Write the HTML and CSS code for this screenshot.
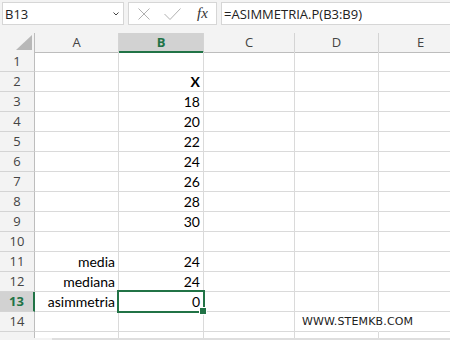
FILE: index.html
```html
<!DOCTYPE html>
<html lang="it">
<head>
    <meta charset="UTF-8">
    <title>asimmetria</title>
    <link rel="stylesheet" href="styles.css">
</head>
<body>
    <div class="toolbar">
        <div class="namebox">
            <span>B13</span>
            <svg class="chev" width="6" height="4" viewBox="0 0 6 4"><path d="M0.5 0.5L3 3L5.5 0.5" stroke="#444" fill="none"/></svg>
        </div>
        <div class="fbtns">
            <svg width="12" height="12" viewBox="0 0 12 12"><path d="M0.5 0.5L11.5 11.5M11.5 0.5L0.5 11.5" stroke="#b0b0b0" fill="none"/></svg>
            <svg class="ok" width="17" height="12" viewBox="0 0 17 12"><path d="M0.5 6L6 11.5L16.5 0.5" stroke="#b0b0b0" fill="none"/></svg>
            <span class="fx">fx</span>
        </div>
        <div class="formula">=ASIMMETRIA.P(B3:B9)</div>
    </div>

    <div class="sheet">
        <div class="row head">
            <div class="corner"><svg width="16" height="15" viewBox="0 0 16 15"><path d="M16 0V15H0Z" fill="#b8b8b8"/></svg></div>
            <div class="ch">A</div><div class="ch sel">B</div><div class="ch">C</div><div class="ch">D</div><div class="ch">E</div>
        </div>
        <div class="row"><div class="rh">1</div><div class="c"></div><div class="c"></div><div class="c"></div><div class="c"></div><div class="c"></div></div>
        <div class="row"><div class="rh">2</div><div class="c"></div><div class="c bold">X</div><div class="c"></div><div class="c"></div><div class="c"></div></div>
        <div class="row"><div class="rh">3</div><div class="c"></div><div class="c">18</div><div class="c"></div><div class="c"></div><div class="c"></div></div>
        <div class="row"><div class="rh">4</div><div class="c"></div><div class="c">20</div><div class="c"></div><div class="c"></div><div class="c"></div></div>
        <div class="row"><div class="rh">5</div><div class="c"></div><div class="c">22</div><div class="c"></div><div class="c"></div><div class="c"></div></div>
        <div class="row"><div class="rh">6</div><div class="c"></div><div class="c">24</div><div class="c"></div><div class="c"></div><div class="c"></div></div>
        <div class="row"><div class="rh">7</div><div class="c"></div><div class="c">26</div><div class="c"></div><div class="c"></div><div class="c"></div></div>
        <div class="row"><div class="rh">8</div><div class="c"></div><div class="c">28</div><div class="c"></div><div class="c"></div><div class="c"></div></div>
        <div class="row"><div class="rh">9</div><div class="c"></div><div class="c">30</div><div class="c"></div><div class="c"></div><div class="c"></div></div>
        <div class="row"><div class="rh">10</div><div class="c"></div><div class="c"></div><div class="c"></div><div class="c"></div><div class="c"></div></div>
        <div class="row"><div class="rh">11</div><div class="c">media</div><div class="c">24</div><div class="c"></div><div class="c"></div><div class="c"></div></div>
        <div class="row"><div class="rh">12</div><div class="c">mediana</div><div class="c">24</div><div class="c"></div><div class="c"></div><div class="c"></div></div>
        <div class="row"><div class="rh sel">13</div><div class="c">asimmetria</div><div class="c active">0</div><div class="c"></div><div class="c"></div><div class="c"></div></div>
        <div class="row"><div class="rh">14</div><div class="c"></div><div class="c"></div><div class="c"></div><div class="c wm">WWW.STEMKB.COM</div><div class="c"></div></div>
        <div class="row"><div class="rh"></div><div class="c"></div><div class="c"></div><div class="c"></div><div class="c"></div><div class="c"></div></div>
    </div>
    <div class="hbar"><div class="hbar-left"></div><div class="hbar-track"></div></div>
</body>
</html>
```

FILE: styles.css
```css
*{
    box-sizing: border-box;
}
body{
    margin: 0;
    width: 450px;
    height: 340px;
    overflow: hidden;
    background-color: #fff;
    font-family: "Open Sans", sans-serif;
    color: #222;
}

/* formula bar */
.toolbar{
    display: flex;
    align-items: flex-start;
    gap: 4px;
    height: 33px;
    padding: 2px 0 0 2px;
    background-color: #f3f3f3;
}
.namebox,
.fbtns,
.formula{
    height: 23px;
    background-color: #fff;
    border: 1px solid #d6d6d6;
    display: flex;
    align-items: center;
    font-size: 13px;
}
.namebox{
    width: 122px;
    justify-content: space-between;
    padding: 0 4px 0 2px;
}
.chev{
    margin-top: 1px;
}
.fbtns{
    width: 89px;
    padding-left: 9px;
}
.ok{
    margin-left: 14px;
}
.fx{
    margin-left: 16px;
    font-family: "Liberation Serif", serif;
    font-style: italic;
    font-size: 15px;
    color: #333;
}
.formula{
    flex: 1;
    padding-left: 2px;
    border-right: none;
}

/* grid */
.sheet{
    height: 305px;
    overflow: hidden;
}
.row{
    display: grid;
    grid-template-columns: 35px 84px 85px 91px 84px 84px;
    height: 20px;
}
.row.head{
    height: 19px;
}
.corner,
.ch{
    background-color: #f3f3f3;
    border-right: 1px solid #d4d4d4;
    border-bottom: 1px solid #bdbdbd;
    font-size: 13px;
    line-height: 18px;
    text-align: center;
    color: #444;
}
.corner{
    display: flex;
    justify-content: flex-end;
    align-items: flex-end;
    padding: 0 2px 2px 0;
    border-right-color: #bdbdbd;
}
.ch.sel{
    background-color: #d2d2d2;
    border-bottom: 2px solid #217346;
    color: #217346;
    font-weight: bold;
}
.rh{
    background-color: #f3f3f3;
    border-right: 1px solid #bdbdbd;
    border-bottom: 1px solid #d4d4d4;
    font-size: 13px;
    line-height: 19px;
    text-align: center;
    color: #444;
}
.rh.sel{
    background-color: #d2d2d2;
    border-right: 2px solid #217346;
    color: #217346;
    font-weight: bold;
}
.c{
    border-right: 1px solid #dadada;
    border-bottom: 1px solid #dadada;
    font-family: Lato, sans-serif;
    font-size: 14px;
    line-height: 19px;
    padding: 0 3px;
    text-align: right;
    white-space: nowrap;
    color: #000;
}
.bold{
    font-weight: bold;
}
.active{
    position: relative;
}
.active::after{
    content: '';
    position: absolute;
    left: -2px;
    top: -2px;
    right: -2px;
    bottom: -2px;
    border: 2px solid #217346;
}
.active::before{
    content: '';
    position: absolute;
    right: -4px;
    bottom: -4px;
    width: 6px;
    height: 6px;
    background-color: #217346;
    border: 1px solid #fff;
    z-index: 1;
}
.wm{
    overflow: visible;
    text-align: left;
    padding-left: 7px;
    border-right-color: transparent;
    font-family: "DejaVu Sans", sans-serif;
    font-size: 11px;
    letter-spacing: 0.15px;
    color: #222;
}

.hbar{
    display: flex;
    height: 2px;
}
.hbar-left{
    width: 52px;
    background-color: #f3f3f3;
}
.hbar-track{
    flex: 1;
    background-color: #dedede;
}
```
